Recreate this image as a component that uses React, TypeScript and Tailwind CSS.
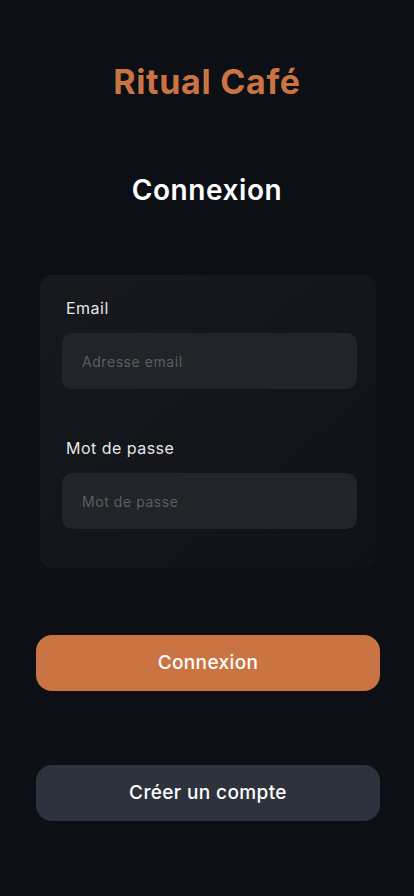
import React, { useState } from "react";

const font = { fontFamily: "Inter, 'Noto Sans', sans-serif" };

type FieldProps = {
  label: string;
  placeholder: string;
  type?: string;
  value: string;
  setValue: React.Dispatch<React.SetStateAction<string>>;
};

const Field = ({ label, placeholder, type = "text", value, setValue }: FieldProps) => {
  return (
    <div className="flex flex-col">
      <label className="pl-[4px] text-[16px] leading-6 tracking-[0.03em] text-[#e6e6e8]">{label}</label>
      <input
        type={type}
        value={value}
        placeholder={placeholder}
        onChange={(e) => setValue(e.target.value)}
        className="mt-[13px] h-[56px] w-full rounded-[10px] bg-[#212429] px-5 text-[14px] tracking-[0.04em] text-white placeholder:text-[#5b5e63] outline-none"
      />
    </div>
  );
};

const App = () => {
  const [email, setEmail] = useState("");
  const [password, setPassword] = useState("");

  return (
    <div className="min-h-[896px] w-full bg-[#0c0f14] flex flex-col items-center" style={font}>
      <h1 className="mt-[64px] text-[34px] leading-9 font-bold tracking-[0.02em] text-[#cb7443]">Ritual Café</h1>
      <h2 className="mt-[74px] text-[28px] leading-8 font-semibold tracking-[0.02em] text-white">Connexion</h2>

      <div className="mt-[69px] w-[336px] self-start ml-[40px] rounded-[12px] bg-gradient-to-br from-[#17191e] to-[#0f1216] pl-[22px] pr-[19px] pt-[21px] pb-[39px]">
        <Field label="Email" placeholder="Adresse email" value={email} setValue={setEmail} />
        <div className="mt-[47px]">
          <Field label="Mot de passe" placeholder="Mot de passe" type="password" value={password} setValue={setPassword} />
        </div>
      </div>

      <button className="mt-[67px] self-start ml-[36px] h-[56px] w-[344px] rounded-[16px] bg-[#cb7443] text-[19px] font-medium tracking-[0.02em] text-white">
        Connexion
      </button>
      <button className="mt-[74px] self-start ml-[36px] h-[56px] w-[344px] rounded-[16px] bg-[#2d333d] text-[19px] font-medium tracking-[0.02em] text-white">
        Créer un compte
      </button>
    </div>
  );
};

export default App;
